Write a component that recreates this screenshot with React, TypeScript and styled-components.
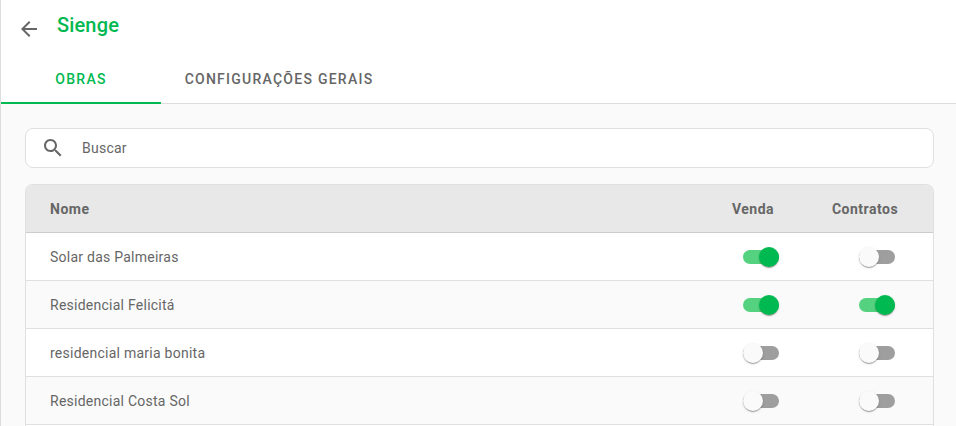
import { useState } from 'react';
import styled, { createGlobalStyle } from 'styled-components';

const GREEN = '#00b950';

const works = [
  { name: 'Solar das Palmeiras', sale: true, contracts: false },
  { name: 'Residencial Felicitá', sale: true, contracts: true },
  { name: 'residencial maria bonita', sale: false, contracts: false },
  { name: 'Residencial Costa Sol', sale: false, contracts: false },
];

export default function App() {
  const [tab, setTab] = useState(0);

  return (
    <Page>
      <GlobalStyle />
      <Header>
        <BackButton aria-label="Voltar">
          <svg width="24" height="24" viewBox="0 0 24 24" fill="currentColor">
            <path d="M20 11H7.83l5.59-5.59L12 4l-8 8 8 8 1.41-1.41L7.83 13H20v-2z" />
          </svg>
        </BackButton>
        <Title>Sienge</Title>
      </Header>

      <Tabs>
        <Tab $active={tab === 0} $width={160} onClick={() => setTab(0)}>
          Obras
        </Tab>
        <Tab $active={tab === 1} $width={236} onClick={() => setTab(1)}>
          Configurações gerais
        </Tab>
      </Tabs>

      <Content>
        <SearchBox>
          <svg width="24" height="24" viewBox="0 0 24 24" fill="currentColor">
            <path d="M15.5 14h-.79l-.28-.27C15.41 12.59 16 11.11 16 9.5 16 5.91 13.09 3 9.5 3S3 5.91 3 9.5 5.91 16 9.5 16c1.61 0 3.09-.59 4.23-1.57l.27.28v.79l5 4.99L20.49 19l-4.99-5zm-6 0C7.01 14 5 11.99 5 9.5S7.01 5 9.5 5 14 7.01 14 9.5 11.99 14 9.5 14z" />
          </svg>
          <SearchInput placeholder="Buscar" />
        </SearchBox>

        <Table>
          <HeadRow>
            <NameCell>Nome</NameCell>
            <SaleCell $shift={16}>Venda</SaleCell>
            <ContractsCell $shift={24}>Contratos</ContractsCell>
          </HeadRow>
          {works.map((work) => (
            <Row key={work.name}>
              <NameCell>{work.name}</NameCell>
              <SaleCell>
                <Toggle $on={work.sale} />
              </SaleCell>
              <ContractsCell>
                <Toggle $on={work.contracts} />
              </ContractsCell>
            </Row>
          ))}
          <Row />
        </Table>
      </Content>
    </Page>
  );
}

const GlobalStyle = createGlobalStyle`
  html, body {
    margin: 0;
    height: 100%;
    overflow: hidden;
    font-family: Roboto, "Liberation Sans", sans-serif;
    color: #666;
  }
`;

const Page = styled.div`
  height: 426px;
  overflow: hidden;
  background: #fff;
  border-left: 1px solid #ddd;
`;

const Header = styled.div`
  display: flex;
  align-items: center;
  height: 55px;
  padding-left: 16px;
`;

const BackButton = styled.div`
  display: flex;
  width: 24px;
  height: 24px;
  margin-top: 2px;
  color: #666;
`;

const Title = styled.h1`
  margin: -5px 0 0 16px;
  color: ${GREEN};
  font-size: 20px;
  font-weight: 500;
  line-height: 24px;
  letter-spacing: 0.15px;
`;

const Tabs = styled.div`
  display: flex;
  height: 48px;
  border-bottom: 1px solid #ddd;
`;

const Tab = styled.div<{ $active: boolean; $width: number }>`
  display: flex;
  align-items: center;
  justify-content: center;
  width: ${(p) => p.$width}px;
  margin-bottom: -1px;
  box-sizing: border-box;
  border-bottom: 2px solid ${(p) => (p.$active ? GREEN : 'transparent')};
  color: ${(p) => (p.$active ? GREEN : '#666')};
  font-size: 14px;
  font-weight: 500;
  letter-spacing: 1.25px;
  text-transform: uppercase;
  cursor: pointer;
`;

const Content = styled.div`
  height: 322px;
  padding: 24px 22px 0 24px;
  background: #fafafa;
`;

const SearchBox = styled.div`
  display: flex;
  align-items: center;
  height: 40px;
  box-sizing: border-box;
  padding-left: 15px;
  background: #fff;
  border: 1px solid #e0e0e0;
  border-radius: 8px;
  color: #666;
`;

const SearchInput = styled.input`
  flex: 1;
  margin-left: 15px;
  border: 0;
  padding: 1px 2px;
  outline: 0;
  background: transparent;
  color: #666;
  font-family: inherit;
  font-size: 14px;
  letter-spacing: 0.25px;

  &::placeholder {
    color: #666;
    opacity: 1;
  }
`;

const Table = styled.div`
  margin-top: 16px;
  border: 1px solid #e0e0e0;
  border-bottom: 0;
  border-radius: 8px 8px 0 0;
  overflow: hidden;
`;

const HeadRow = styled.div`
  display: flex;
  align-items: center;
  height: 48px;
  box-sizing: border-box;
  background: #e8e8e8;
  border-bottom: 1px solid #ccc;
  font-size: 14px;
  font-weight: 700;
  letter-spacing: 0.5px;
`;

const Row = styled.div`
  display: flex;
  align-items: center;
  height: 48px;
  box-sizing: border-box;
  background: #fff;
  border-bottom: 1px solid #e0e0e0;
  font-size: 14px;
  letter-spacing: 0.25px;

  &:nth-child(odd) {
    background: #fafafa;
  }
`;

const NameCell = styled.div`
  flex: 1;
  padding-left: 24px;
`;

const SaleCell = styled.div<{ $shift?: number }>`
  display: flex;
  justify-content: center;
  width: 120px;
  box-sizing: border-box;
  padding-right: ${(p) => p.$shift ?? 0}px;
`;

const ContractsCell = styled.div<{ $shift?: number }>`
  display: flex;
  justify-content: center;
  width: 112px;
  box-sizing: border-box;
  padding-right: ${(p) => p.$shift ?? 0}px;
`;

const Toggle = styled.div<{ $on: boolean }>`
  position: relative;
  width: 36px;
  height: 14px;
  border-radius: 7px;
  background: ${(p) => (p.$on ? '#55d27f' : '#9e9e9e')};

  &::after {
    content: '';
    position: absolute;
    top: -3px;
    left: ${(p) => (p.$on ? '16px' : '0')};
    width: 20px;
    height: 20px;
    border-radius: 50%;
    background: ${(p) => (p.$on ? GREEN : '#fafafa')};
    box-shadow: 0 2px 1px -1px rgba(0, 0, 0, 0.2), 0 1px 1px rgba(0, 0, 0, 0.14), 0 1px 3px rgba(0, 0, 0, 0.12);
  }
`;
